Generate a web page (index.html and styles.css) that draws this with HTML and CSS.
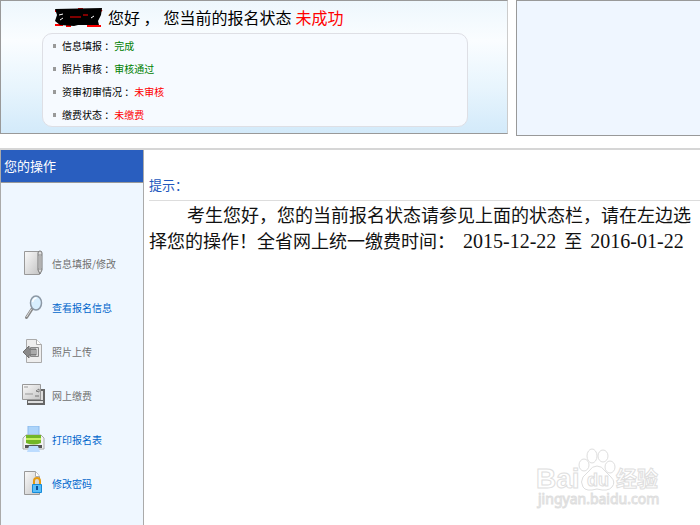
FILE: index.html
```html
<!DOCTYPE html>
<html lang="zh-CN">
<head>
  <meta charset="UTF-8" />
  <title>网上报名</title>
  <meta name="viewport" content="width=device-width, initial-scale=1.0" />
  <link rel="stylesheet" href="styles.css">
</head>
<body>
  <header class="top">
    <section class="status">
      <h1 class="greeting">
        <svg class="masked" width="50" height="20" viewBox="0 0 50 20">
          <path d="M1 4h6M1 18h8M12 19h5M33 19h14M24 2h5M45 2l3 2" stroke="#f00" stroke-width="2" />
          <path d="M1 2L48 1 47 8 44 14 45 18 24 18 20 19 6 18 1 14 3 8z" fill="#000" />
          <path d="M16 10l11 0M29 8h5" stroke="#f00" stroke-width="1" />
          <path d="M5 8l4-1M6 13l3-2M37 11l3-2" stroke="#fff" />
        </svg>
        <span>您好 ，</span>
        <span>您当前的报名状态</span>
        <span class="bad">未成功</span>
      </h1>
      <ul class="status-list">
        <li>信息填报 ：<span class="ok">完成</span></li>
        <li>照片审核 ：<span class="ok">审核通过</span></li>
        <li>资审初审情况 ：<span class="bad">未审核</span></li>
        <li>缴费状态 ：<span class="bad">未缴费</span></li>
      </ul>
    </section>
    <aside class="side-panel"></aside>
  </header>

  <div class="content">
    <nav class="sidebar">
      <h2 class="sidebar-title">您的操作</h2>
      <ul class="menu">
        <li>
          <a href="#" class="off">
            <svg width="24" height="26" viewBox="0 0 24 26">
              <defs>
                <linearGradient id="paper" x1="0" y1="0" x2="1" y2="1">
                  <stop offset="0" stop-color="#fafafa" />
                  <stop offset="1" stop-color="#c4c4c4" />
                </linearGradient>
              </defs>
              <path d="M2.500 1.500h15v23h-15z" fill="url(#paper)" stroke="#999" />
              <path d="M16 3q0-2 2-2t2 2v17l-2 4-2-4z" fill="#ddd" stroke="#777" />
              <path d="M16 5h4M16 19h4M18 6v12" stroke="#888" />
            </svg>
            信息填报/修改
          </a>
        </li>
        <li>
          <a href="#">
            <svg width="24" height="26" viewBox="0 0 24 26">
              <path d="M10 15L4.500 23.500" stroke="#888" stroke-width="3" stroke-linecap="round" />
              <path d="M9.500 15L4.500 23" stroke="#ddd" />
              <ellipse cx="14" cy="9" rx="5.500" ry="7" fill="#d8efff" stroke="#8c98a5" stroke-width="1.500" />
              <path d="M10.500 8q1-4 4-4" stroke="#fff" stroke-width="1.500" fill="none" />
            </svg>
            查看报名信息
          </a>
        </li>
        <li>
          <a href="#" class="off">
            <svg width="24" height="26" viewBox="0 0 24 26">
              <path d="M4.500 1.500h10l5 5v18h-15z" fill="#eee" stroke="#aaa" />
              <path d="M14.500 1.500v5h5" fill="#fff" stroke="#aaa" />
              <path d="M8.500 9.500h8v9h-8z" fill="#ddd" stroke="#888" />
              <path d="M1 14l6-6v3h7v6H7v3z" fill="#8a8a8a" stroke="#707070" />
              <path d="M9 12h6v4H9z" fill="#aaa" />
            </svg>
            照片上传
          </a>
        </li>
        <li>
          <a href="#" class="off">
            <svg width="24" height="26" viewBox="0 0 24 26">
              <path d="M5 7h18v16H5z" fill="#666" />
              <path d="M6 19h15v2H6zM19 9h2v9h-2z" fill="#ddd" />
              <path d="M.500 2.500h18v15H.500z" fill="url(#paper)" stroke="#999" />
              <path d="M2 5h4M3 12h8" stroke="#999" />
              <path d="M14 9l3-2v3zM13 14h4" fill="#fff" stroke="#777" />
            </svg>
            网上缴费
          </a>
        </li>
        <li>
          <a href="#">
            <svg width="24" height="26" viewBox="0 0 24 26">
              <path d="M6 0h11v10H6z" fill="#acd4fa" stroke="#8ab9ec" />
              <path d="M1 12l3-3h15l3 3v11H1z" fill="#f3f3f3" stroke="#aaa" />
              <path d="M4 9h15v8q-7 3-15 0z" fill="#72b626" />
              <path d="M4 12h15v2H4z" fill="#c5f064" />
              <path d="M3 19h17v3H3z" fill="#555" />
              <path d="M7 20h9l2 6H5z" fill="#bcdcff" />
            </svg>
            打印报名表
          </a>
        </li>
        <li>
          <a href="#">
            <svg width="24" height="26" viewBox="0 0 24 26">
              <path d="M2.500 1.500h11l4 5v18h-15z" fill="url(#paper)" stroke="#999" />
              <path d="M13.500 1.500v5h4" fill="#fff" stroke="#aaa" />
              <path d="M12 15v-4q0-3 3-3t3 3v4" fill="none" stroke="#e49a10" stroke-width="2" />
              <path d="M10.500 14.500h9v8h-9z" fill="#58bdf8" stroke="#168bd8" />
              <path d="M15 16v4" stroke="#0b4f96" stroke-width="2" />
            </svg>
            修改密码
          </a>
        </li>
      </ul>
    </nav>

    <main class="main">
      <h2 class="tip-title">提示：</h2>
      <p class="tip">考生您好，您的当前报名状态请参见上面的状态栏，请在左边选择您的操作！全省网上统一缴费时间：<span class="date">2015-12-22</span>至<span class="date">2016-01-22</span></p>
    </main>
  </div>

  <svg class="watermark" width="130" height="64" viewBox="0 0 130 64">
    <g fill="#fff" stroke="#dedede">
      <text x="0" y="43" class="wm-logo">Bai</text>
      <ellipse cx="48" cy="20" rx="5" ry="6" />
      <ellipse cx="56" cy="11" rx="5" ry="7" />
      <ellipse cx="67" cy="11" rx="5" ry="6" />
      <ellipse cx="74" cy="22" rx="5" ry="6" />
      <path d="M61 21q5 0 8 5l6 6q5 5 1 10t-15 2q-11 3-14-2t0-10l6-6q3-5 8-5z" />
      <text x="51" y="41" class="wm-du">du</text>
      <text x="80" y="41" class="wm-cn">经验</text>
      <text x="2" y="59" class="wm-url">jingyan.baidu.com</text>
    </g>
  </svg>
</body>
</html>
```

FILE: styles.css
```css
* { box-sizing: border-box; }
body { margin: 0; background: #fff; color: #000; font-family: "Noto Sans CJK SC", sans-serif; }
h1, h2, p, ul { margin: 0; padding: 0; font-weight: normal; }
ul { list-style: none; }
a { color: #0066cc; text-decoration: none; }
.ok { color: #008000; }
.bad { color: #f00; }

/* status bar */
.top { display: flex; gap: 8px; align-items: flex-start; }
.status { flex: 0 0 508px; padding: 4px 39px 6px 41px; border: 1px solid #999; border-right-color: #ccc; background: linear-gradient(#eef7fd, #fafdff 30%, #e8f5fd 65%, #d3eafa); }
.greeting { display: flex; align-items: center; gap: 4px; height: 28px; padding: 0 0 4px 12px; font-size: 16px; }
.status-list { padding: 0 0 0 10px; border: 1px solid #dedfe5; border-radius: 10px; background: #f6faff; }
.status-list li { display: flex; align-items: center; height: 23px; font-size: 10px; white-space: pre; }
.status-list li::before { content: ""; width: 3px; height: 4px; margin-right: 6px; background: #999; }
.side-panel { flex: 1; height: 136px; border: 1px solid #999; border-right: 0; background: #eff6ff; }

/* lower part */
.content { display: flex; min-height: calc(100vh - 148px); margin-top: 12px; border-top: 2px solid #d6d6d6; }
.sidebar { flex: 0 0 144px; border: 1px solid #aaa; border-width: 0 1px; background: #eff7ff; }
.sidebar-title { padding: 0 3px; border-bottom: 1px solid #999; background: #295ebf; color: #fff; font-size: 13px; line-height: 32px; }
.menu { padding-top: 58px; }
.menu a { display: flex; align-items: center; gap: 6px; height: 44px; padding-left: 21px; font-size: 10px; }
.menu .off { color: #707070; }
.main { flex: 1; padding: 22px 0 0 5px; }
.tip-title { padding-bottom: 2px; border-bottom: 1px solid #ddd; color: #2258bd; font-size: 13px; line-height: 26px; }
.tip { color: #111; font-size: 18px; line-height: 26px; text-indent: 38px; }
.date { margin: 0 8px; font-family: "Liberation Serif", serif; font-size: 20px; }

.watermark { position: absolute; right: 34px; bottom: 16px; }
.wm-logo { font: bold 28px "Liberation Sans", sans-serif; }
.wm-du { font: bold 18px "Liberation Sans", sans-serif; }
.wm-cn { font: bold 21px "Noto Sans CJK SC", sans-serif; }
.wm-url { font: 14px "Noto Sans", sans-serif; }
```
